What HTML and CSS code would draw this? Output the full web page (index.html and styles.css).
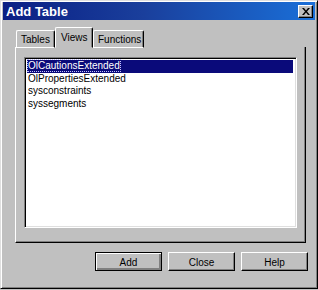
FILE: index.html
```html
<!DOCTYPE html>
<html>
<head>
<meta charset="utf-8">
<title>Add Table</title>
<link rel="stylesheet" href="styles.css">
</head>
<body>
<div class="window">
  <div class="titlebar">
    <span class="title">Add Table</span>
    <span class="close-btn">
      <svg width="8" height="7" viewBox="0 0 8 7"><path d="M0 0h2l2 2.5 2-2.5h2L5 3.5 8 7H6L4 4.5 2 7H0l3-3.5z" fill="#000"/></svg>
    </span>
  </div>
  <div class="content">
    <div class="tabs">
      <div class="tab">Tables</div>
      <div class="tab selected">Views</div>
      <div class="tab last">Functions</div>
    </div>
    <div class="panel">
      <div class="listbox">
        <div class="row active"><span class="focus">OlCautionsExtended</span></div>
        <div class="row">OlPropertiesExtended</div>
        <div class="row">sysconstraints</div>
        <div class="row">syssegments</div>
      </div>
    </div>
    <div class="buttons">
      <div class="btn default">Add</div>
      <div class="btn">Close</div>
      <div class="btn">Help</div>
    </div>
  </div>
</div>
</body>
</html>
```
FILE: styles.css
```css
html, body {
  margin: 0;
  padding: 0;
  background: #c0c0c0;
}
body {
  font-family: "Liberation Sans", Arial, sans-serif;
  font-size: 10px;
  color: #000;
}
.window {
  width: 318px;
  height: 289px;
  box-sizing: border-box;
  border-top: 1px solid #dfdfdf;
  border-left: 1px solid #dfdfdf;
  border-right: 1px solid #000;
  border-bottom: 1px solid #000;
  box-shadow: inset 1px 1px 0 #fff, inset -1px -1px 0 #808080;
  padding: 1px 2px 2px 2px;
  display: flex;
  flex-direction: column;
}
.titlebar {
  height: 18px;
  background: linear-gradient(to right, #0a1f84 0%, #1a3f9c 45%, #1a6fd8 100%);
  display: flex;
  align-items: center;
  justify-content: space-between;
  padding: 0 2px 0 3px;
}
.title {
  color: #fff;
  font-weight: bold;
  font-size: 13px;
}
.close-btn {
  width: 15px;
  height: 13px;
  box-sizing: border-box;
  background: #c0c0c0;
  border-top: 1px solid #fff;
  border-left: 1px solid #fff;
  border-right: 1px solid #000;
  border-bottom: 1px solid #000;
  box-shadow: inset -1px -1px 0 #808080;
  display: flex;
  align-items: center;
  justify-content: center;
}
.content {
  padding: 7px 8px 0 12px;
  display: flex;
  flex-direction: column;
}
.tabs {
  display: flex;
  align-items: flex-end;
  height: 21px;
  padding-left: 1px;
  position: relative;
  z-index: 1;
  margin-bottom: -1px;
}
.tab {
  height: 18px;
  box-sizing: border-box;
  border-top: 1px solid #fff;
  border-left: 1px solid #fff;
  border-right: 1px solid #000;
  border-radius: 2px 2px 0 0;
  box-shadow: inset -1px 0 0 #808080;
  padding: 3px 3px 0 4px;
  width: 39px;
  background: #c0c0c0;
  border-bottom: 1px solid #fff;
  white-space: nowrap;
}
.tab.selected {
  height: 21px;
  width: 38px;
  padding-top: 4px;
  padding-left: 5px;
  border-bottom: 1px solid #c0c0c0;
}
.tab.last {
  width: 51px;
}
.panel {
  height: 196px;
  box-sizing: border-box;
  margin-right: 1px;
  border-left: 1px solid #fff;
  border-right: 1px solid #000;
  border-bottom: 1px solid #000;
  box-shadow: inset -1px -1px 0 #808080;
  padding: 10px 8px 0 8px;
}
.listbox {
  height: 171px;
  box-sizing: border-box;
  background: #fff;
  border-top: 1px solid #808080;
  border-left: 1px solid #808080;
  border-right: 1px solid #fff;
  border-bottom: 1px solid #fff;
  box-shadow: inset 1px 1px 0 #000, inset -1px -1px 0 #dfdfdf;
  padding: 2px 3px 2px 2px;
}
.row {
  height: 12.5px;
  line-height: 12px;
  padding-left: 1px;
  white-space: nowrap;
}
.row.active {
  background: #0a0a7a;
  color: #fff;
}
.focus {
  outline: 1px dotted #c0c0ff;
  outline-offset: 0;
}
.buttons {
  display: flex;
  justify-content: flex-end;
  gap: 6px;
  margin-top: 9px;
  margin-right: -1px;
}
.btn {
  width: 67px;
  height: 19px;
  box-sizing: border-box;
  border-top: 1px solid #fff;
  border-left: 1px solid #fff;
  border-right: 1px solid #000;
  border-bottom: 1px solid #000;
  box-shadow: inset -1px -1px 0 #808080;
  display: flex;
  align-items: center;
  justify-content: center;
  padding-top: 1px;
}
.btn.default {
  border: 1px solid #000;
  box-shadow: inset 1px 1px 0 #fff, inset -2px -2px 0 #808080;
}
```
